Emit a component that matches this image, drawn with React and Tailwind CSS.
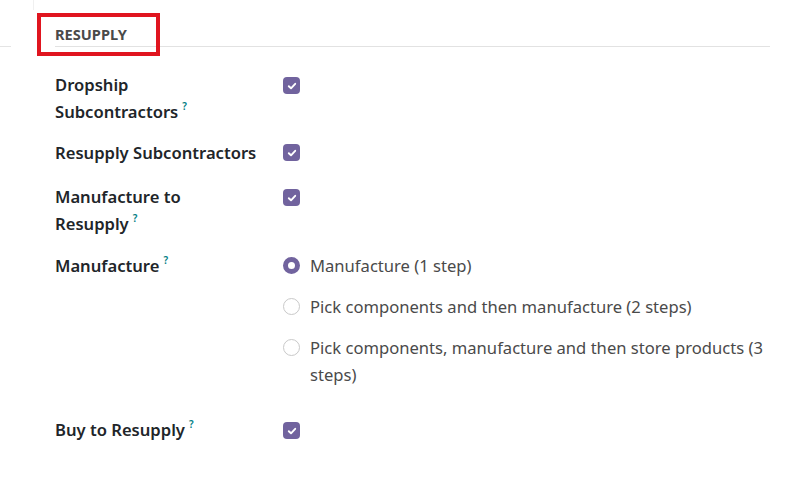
import React, { useState } from 'react';

const font = { fontFamily: '"Noto Sans", "Open Sans", sans-serif' };

const Help = () => (
  <span className="relative top-[-8px] ml-[4px] text-[10px] leading-none font-semibold text-[#017e84]">?</span>
);

const Check = ({ checked, onChange }) => (
  <button
    onClick={onChange}
    className={`w-[17px] h-[17px] rounded-[4px] flex items-center justify-center ${
      checked ? 'bg-[#71639e]' : 'bg-white border border-gray-300'
    }`}
  >
    {checked && (
      <svg width="10" height="10" viewBox="0 0 10 10" fill="none">
        <path d="M1.8 5.2 L4 7.3 L8.2 2.8" stroke="white" strokeWidth="1.9" strokeLinecap="round" strokeLinejoin="round" />
      </svg>
    )}
  </button>
);

const Radio = ({ checked }) =>
  checked ? (
    <span className="block w-[17px] h-[17px] rounded-full border-[5px] border-[#71639e] bg-white shrink-0" />
  ) : (
    <span className="block w-[17px] h-[17px] rounded-full border border-[#c9c9c9] bg-white shrink-0" />
  );

const Row = ({ label, children, className = '' }) => (
  <div className={`flex ${className}`}>
    <div className="w-[228px] shrink-0 text-[16.6px] leading-[27px] font-semibold text-[#212529] whitespace-nowrap">{label}</div>
    <div className="flex-1">{children}</div>
  </div>
);

export default function App() {
  const [checks, setChecks] = useState({ dropship: true, resupply: true, manufacture: true, buy: true });
  const [step, setStep] = useState(1);
  const toggle = (k) => setChecks((c) => ({ ...c, [k]: !c[k] }));

  const steps = [
    { id: 1, text: 'Manufacture (1 step)' },
    { id: 2, text: 'Pick components and then manufacture (2 steps)' },
    { id: 3, text: <>Pick components, manufacture and then store products (3<br />steps)</> },
  ];

  return (
    <div className="w-[786px] h-[479px] bg-white relative overflow-hidden" style={font}>
      {/* faint fragments of neighbouring layout */}
      <div className="absolute left-0 top-[46px] w-[11px] h-px bg-[#e4e4e4]" />
      <div className="absolute left-[33px] top-0 w-px h-[10px] bg-[#f0f0f0]" />

      {/* Section header */}
      <div className="pl-[55px] pr-[16px] pt-[26px]">
        <div className="border-b border-[#e2e2e2] pb-[3px] text-[14.6px] leading-[17px] font-bold text-[#4a4a4a]">
          RESUPPLY
        </div>
      </div>

      {/* highlight box */}
      <div className="absolute left-[37px] top-[13px] w-[123px] h-[43px] border-[4px] border-[#e0151f]" />

      <div className="pl-[55px] pt-[24px]">
        <Row label={<>Dropship<br />Subcontractors<Help /></>}>
          <div className="pt-[6px]"><Check checked={checks.dropship} onChange={() => toggle('dropship')} /></div>
        </Row>

        <Row className="mt-[14px]" label="Resupply Subcontractors">
          <div className="pt-[5px]"><Check checked={checks.resupply} onChange={() => toggle('resupply')} /></div>
        </Row>

        <Row className="mt-[17px]" label={<>Manufacture to<br />Resupply<Help /></>}>
          <div className="pt-[6px]"><Check checked={checks.manufacture} onChange={() => toggle('manufacture')} /></div>
        </Row>

        <Row className="mt-[15px]" label={<>Manufacture<Help /></>}>
          <div className="flex flex-col gap-[14px]">
            {steps.map((s) => (
              <label key={s.id} className="flex items-start gap-[10px] cursor-pointer" onClick={() => setStep(s.id)}>
                <span className="pt-[5px]"><Radio checked={step === s.id} /></span>
                <span className="text-[16.6px] leading-[27px] text-[#4a4a4a]">{s.text}</span>
              </label>
            ))}
          </div>
        </Row>

        <Row className="mt-[28px]" label={<>Buy to Resupply<Help /></>}>
          <div className="pt-[6px]"><Check checked={checks.buy} onChange={() => toggle('buy')} /></div>
        </Row>
      </div>
    </div>
  );
}
